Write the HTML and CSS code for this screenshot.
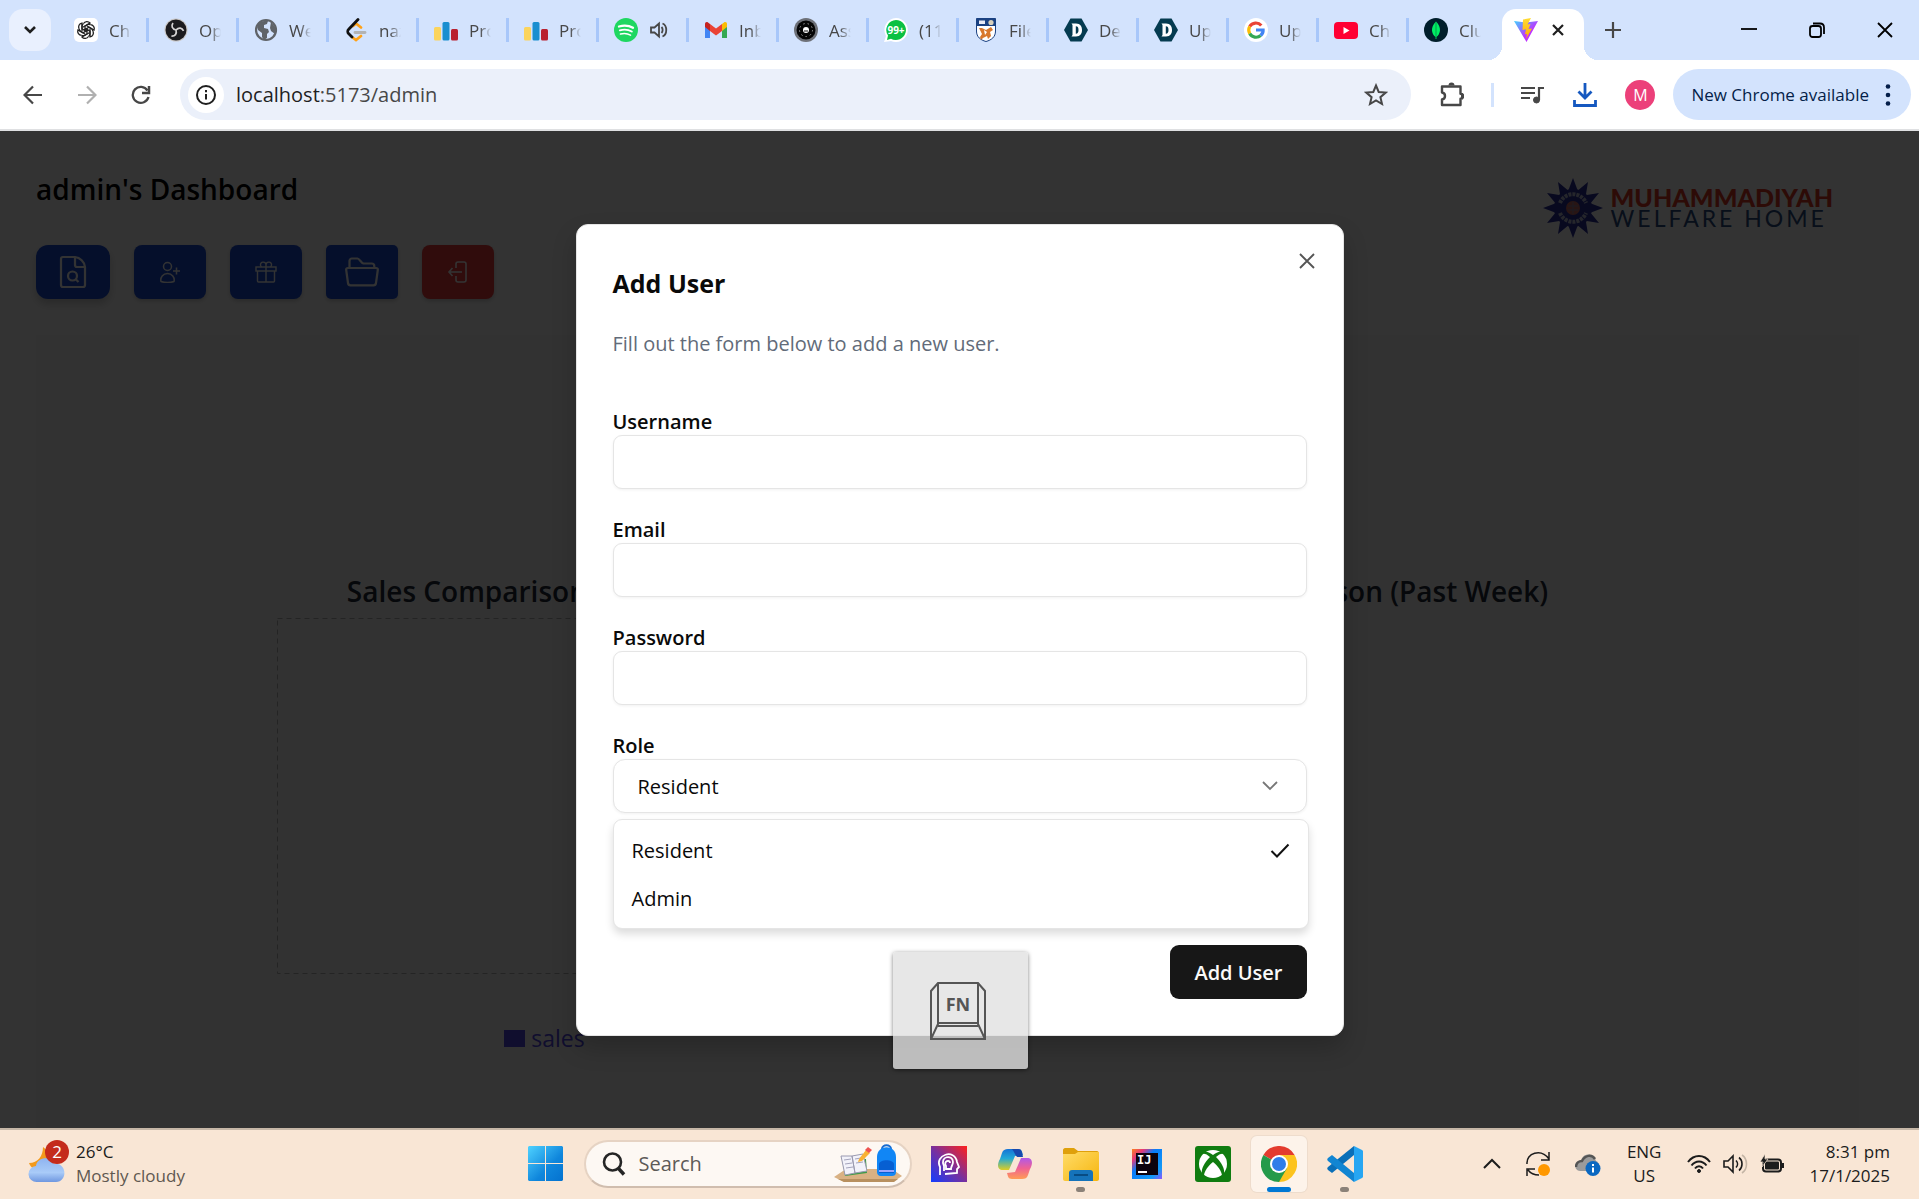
FILE: index.html
```html
<!DOCTYPE html>
<html lang="en">
<head>
    <meta charset="UTF-8">
    <title>Admin Dashboard</title>
    <link rel="stylesheet" href="styles.css">
</head>
<body>
    <!-- tab strip -->
    <div class="tab-strip">
        <button class="tab-search" aria-label="Search tabs">
            <svg width="14" height="10" viewBox="0 0 14 10"><path d="M2 2l5 5 5-5" fill="none" stroke="#1f1f1f" stroke-width="2.6"/></svg>
        </button>
        <div class="tabs">
            <div class="tab">
                <svg class="favicon" viewBox="0 0 24 24"><rect width="24" height="24" rx="5" fill="#fff"/><g fill="none" stroke="#222" stroke-width="1.3"><g id="petal"><path d="M9.500 5.500a4 4 0 0 1 6.500-.5l-5 3v5.500"/><path d="M9.500 5.500c-1.300 1-1.500 2-1.500 3v5"/></g><use href="#petal" transform="rotate(60 12 12)"/><use href="#petal" transform="rotate(120 12 12)"/><use href="#petal" transform="rotate(180 12 12)"/><use href="#petal" transform="rotate(240 12 12)"/><use href="#petal" transform="rotate(300 12 12)"/></g></svg>
                <span class="tab-title">Chat</span>
            </div>
            <div class="tab">
                <svg class="favicon" viewBox="0 0 24 24"><circle cx="12" cy="12" r="11.500" fill="#c9c6c4"/><circle cx="12" cy="12" r="10.500" fill="#1c1b1e"/><g fill="none" stroke="#d5d2d2" stroke-width="1.700"><path id="obs" d="M12 12c-4-1-5-4-3-7"/><use href="#obs" transform="rotate(120 12 12)"/><use href="#obs" transform="rotate(240 12 12)"/></g></svg>
                <span class="tab-title">Open</span>
            </div>
            <div class="tab">
                <svg class="favicon" viewBox="0 0 24 24"><circle cx="12" cy="12" r="10" fill="#d3e3fd" stroke="#5f6368" stroke-width="2.200"/><path d="M3 9c2-5 6-7 11-6l-1 3-3 1v3l4 1 1 3-2 2v4l-3 2-2-3v-4L4 12zM17 4l5 6-1 6-4-3-1-3z" fill="#5f6368"/></svg>
                <span class="tab-title">Web</span>
            </div>
            <div class="tab">
                <svg class="favicon" viewBox="0 0 24 24"><g fill="none" stroke-linecap="round" stroke-width="2.800"><path d="M9 8l3-2.500 5 4M8 19l4 3 5-4" stroke="#ffa116"/><path d="M14 1.500L4.500 11.500c-1 1-1 3 0 4L8 19" stroke="#111"/><path d="M11 14.500h10" stroke="#b3b3b3"/></g></svg>
                <span class="tab-title">nazi</span>
            </div>
            <div class="tab">
                <svg class="favicon" viewBox="0 0 24 24"><rect y="9" width="7" height="13.500" rx="1.500" fill="#fbd45c"/><rect x="8.500" y="4" width="7" height="18.500" rx="1.500" fill="#1a8fd0"/><rect x="17" y="11" width="7" height="11.500" rx="1.500" fill="#b9202f"/></svg>
                <span class="tab-title">Proj</span>
            </div>
            <div class="tab">
                <svg class="favicon" viewBox="0 0 24 24"><rect y="9" width="7" height="13.500" rx="1.500" fill="#fbd45c"/><rect x="8.500" y="4" width="7" height="18.500" rx="1.500" fill="#1a8fd0"/><rect x="17" y="11" width="7" height="11.500" rx="1.500" fill="#b9202f"/></svg>
                <span class="tab-title">Proj</span>
            </div>
            <div class="tab">
                <svg class="favicon" viewBox="0 0 24 24"><circle cx="12" cy="12" r="12" fill="#1ed760"/><g fill="none" stroke="#fff" stroke-linecap="round"><path d="M5 8.500c5-1.500 10-1 14 1.300" stroke-width="2.300"/><path d="M5.800 12.300c4.200-1.200 8.500-.8 12 1.200" stroke-width="1.900"/><path d="M6.500 16c3.500-.9 7-.6 10 1.100" stroke-width="1.600"/></g></svg>
                <svg width="20" height="20" viewBox="0 0 20 20" fill="none" stroke="#474747" stroke-width="1.800"><path d="M2 7.500h3.500L10 3.500v13l-4.500-4H2zM12.500 7c1.500 1.500 1.500 4.500 0 6M13.500 3.500c5 2 5 11 0 13"/></svg>
            </div>
            <div class="tab">
                <svg class="favicon" viewBox="0 0 24 24"><path d="M1 7v13h5V10z" fill="#4285f4"/><path d="M23 7v13h-5V10z" fill="#34a853"/><path d="M18 6l2-1.500c1.500-1 3 0 3 1.500v3l-5 4z" fill="#fbbc04"/><path d="M6 6v7l6 4.500 6-4.500V6l-6 4.500z" fill="#ea4335"/><path d="M1 9V6c0-1.500 1.500-2.500 3-1.500L6 6v7z" fill="#c5221f"/></svg>
                <span class="tab-title">Inbox</span>
            </div>
            <div class="tab">
                <svg class="favicon" viewBox="0 0 24 24"><circle cx="12" cy="12" r="12" fill="#6e7178"/><circle cx="12" cy="12" r="9.500" fill="#050505"/><circle cx="12" cy="12" r="6.500" fill="none" stroke="#999" stroke-dasharray="1.500 3"/><circle cx="12" cy="12" r="3" fill="#fff"/><path d="M10 13h4" stroke="#111"/></svg>
                <span class="tab-title">Assi</span>
            </div>
            <div class="tab">
                <svg class="favicon" viewBox="0 0 24 24"><path d="M12 0a12 12 0 1 1-5 23l-7 1 2-6A12 12 0 0 1 12 0z" fill="#fff"/><path d="M12 2a10 10 0 1 1-5 18.700L3 22l1-4.500A10 10 0 0 1 12 2z" fill="#0bc142"/><text x="12" y="16" text-anchor="middle" class="badge-text">99+</text></svg>
                <span class="tab-title">(11)</span>
            </div>
            <div class="tab">
                <svg class="favicon" viewBox="0 0 24 24"><path d="M2.500.5h19V13c0 6-4 9-9.500 10.500C6.500 22 2.500 19 2.500 13z" fill="#fff" stroke="#1b4282"/><path d="M2.500.5h19V8h-19z" fill="#1b4282"/><path d="M5 2.500h6v3.500H5z" fill="#e8eaf5"/><circle cx="17" cy="4.500" r="2.600" fill="#d9d1bc"/><path d="M5 10h3l4 2 5-3 2 3-3 2 1 4-3 3-1-3-4 2-2 2-1-3 2-3z" fill="#d8782c"/><path d="M10 12l3 2-2 3z" fill="#fff"/></svg>
                <span class="tab-title">Files</span>
            </div>
            <div class="tab">
                <svg class="favicon" viewBox="0 0 24 24"><path d="M6.500.5h11L24 12l-6.500 11.500h-11L0 12z" fill="#053b50"/><path d="M7.500 5.500h4.500c4.500 0 6 3 6 6.500s-1.500 6.500-6 6.500H7.500l1-1.500V7zm4.300 2.800v7.400c2.200 0 2.700-1.700 2.700-3.700s-.5-3.700-2.700-3.700z" fill="#fff" fill-rule="evenodd"/></svg>
                <span class="tab-title">Dep</span>
            </div>
            <div class="tab">
                <svg class="favicon" viewBox="0 0 24 24"><path d="M6.500.5h11L24 12l-6.500 11.500h-11L0 12z" fill="#053b50"/><path d="M7.500 5.500h4.500c4.500 0 6 3 6 6.500s-1.500 6.500-6 6.500H7.500l1-1.500V7zm4.300 2.800v7.400c2.200 0 2.700-1.700 2.700-3.700s-.5-3.700-2.700-3.700z" fill="#fff" fill-rule="evenodd"/></svg>
                <span class="tab-title">Upl</span>
            </div>
            <div class="tab">
                <svg class="favicon" viewBox="0 0 24 24"><circle cx="12" cy="12" r="12" fill="#fff"/><g fill="none" stroke-width="3.200"><path d="M17.300 7.500A7.200 7.200 0 0 0 5.700 8.500" stroke="#ea4335"/><path d="M5.700 8.500a7.200 7.200 0 0 0 0 7" stroke="#fbbc04"/><path d="M5.700 15.500a7.200 7.200 0 0 0 11 2" stroke="#34a853"/><path d="M16.700 17.500c1.700-1.500 2.500-3.500 2.400-5.500H12" stroke="#4285f4"/></g></svg>
                <span class="tab-title">Upl</span>
            </div>
            <div class="tab">
                <svg class="favicon" viewBox="0 0 24 24"><rect y="4" width="24" height="17" rx="4" fill="#ff0033"/><path d="M9.500 9v7l6-3.500z" fill="#fff"/></svg>
                <span class="tab-title">Cha</span>
            </div>
            <div class="tab tab-last">
                <svg class="favicon" viewBox="0 0 24 24"><circle cx="12" cy="12" r="12" fill="#001e2b"/><path d="M12 3.500c6 6 4.500 12.500.4 15.500v2h-.8v-2C7.500 16 6 9.500 12 3.500z" fill="#00ed64"/><path d="M12 4v15" stroke="#00a04a"/></svg>
                <span class="tab-title">Clus</span>
            </div>
            <div class="tab-active">
                <svg class="favicon" viewBox="0 0 24 24">
                    <defs>
                        <linearGradient id="vite" x1="0" y1="0" x2="1" y2="1"><stop stop-color="#41d1ff"/><stop offset=".6" stop-color="#bd34fe"/></linearGradient>
                        <linearGradient id="bolt" x1="0" y1="0" x2="0" y2="1"><stop stop-color="#ffdd35"/><stop offset="1" stop-color="#ffa800"/></linearGradient>
                    </defs>
                    <path d="M0 3l12 1.500L24 3 12.500 24z" fill="url(#vite)"/><path d="M17 0L9 1.500 8.500 12l3.500-.7-1 5 2-.4L12 21l6-10.500-3.500.5 2-5-3 .4z" fill="url(#bolt)"/>
                </svg>
                <button class="icon-button" aria-label="Close tab"><svg width="14" height="14" viewBox="0 0 14 14"><path d="M2 2l10 10M12 2L2 12" stroke="#1f1f1f" stroke-width="2.200"/></svg></button>
            </div>
        </div>
        <button class="icon-button new-tab" aria-label="New tab"><svg width="16" height="16" viewBox="0 0 16 16"><path d="M8 0v16M0 8h16" stroke="#474747" stroke-width="2.200"/></svg></button>
        <div class="window-controls">
            <button class="icon-button" aria-label="Minimize"><svg width="16" height="16" viewBox="0 0 16 16"><path d="M0 7h16" stroke="#000" stroke-width="1.800"/></svg></button>
            <button class="icon-button" aria-label="Restore"><svg width="16" height="16" viewBox="0 0 16 16" fill="none" stroke="#000" stroke-width="1.800"><rect x="1" y="4" width="11" height="11" rx="2.500"/><path d="M4 1.500h7c2.500 0 4 1.500 4 4V12"/></svg></button>
            <button class="icon-button" aria-label="Close"><svg width="16" height="16" viewBox="0 0 16 16"><path d="M1 1l14 14M15 1L1 15" stroke="#000" stroke-width="1.800"/></svg></button>
        </div>
    </div>

    <!-- toolbar -->
    <div class="toolbar">
        <div class="nav-buttons">
            <button class="icon-button" aria-label="Back"><svg width="20" height="20" viewBox="0 0 20 20" fill="none" stroke="#474747" stroke-width="2.200"><path d="M19 10H2M10 1.500L1.500 10l8.500 8.500"/></svg></button>
            <button class="icon-button" aria-label="Forward"><svg width="20" height="20" viewBox="0 0 20 20" fill="none" stroke="#b0b0b0" stroke-width="2.200"><path d="M1 10h17M10 1.500l8.500 8.500-8.500 8.500"/></svg></button>
            <button class="icon-button" aria-label="Reload"><svg width="20" height="20" viewBox="0 0 20 20" fill="none" stroke="#474747" stroke-width="2.300"><path d="M17.500 12A8 8 0 1 1 16.500 5.500"/><path d="M18 1v7h-7" stroke-width="2.500"/></svg></button>
        </div>
        <div class="address-bar">
            <span class="site-info">
                <svg width="22" height="22" viewBox="0 0 22 22"><circle cx="11" cy="11" r="9" fill="none" stroke="#1f1f1f" stroke-width="2"/><path d="M11 10v5.500M11 6v2.200" stroke="#1f1f1f" stroke-width="2"/></svg>
            </span>
            <span class="url"><b>localhost</b>:5173/admin</span>
            <button class="icon-button" aria-label="Bookmark"><svg width="24" height="24" viewBox="0 0 24 24"><path d="M12 2.500l2.700 6.500 7 .6-5.300 4.600 1.600 6.800-6-3.600L6 21l1.600-6.800L2.300 9.600l7-.6z" fill="none" stroke="#474747" stroke-width="2"/></svg></button>
        </div>
        <div class="toolbar-icons">
            <button class="icon-button" aria-label="Extensions"><svg width="26" height="26" viewBox="-1 1 26 26"><path d="M3 5.500h18.500v7.200a2.500 2.500 0 0 1 0 5V24H3v-5.500c4-.5 4-6.500 0-7z" fill="none" stroke="#474747" stroke-width="2.400" stroke-linejoin="round"/><path d="M9.500 4.500a3 3 0 0 1 6 0zM22 12a3 3 0 0 1 0 6z" fill="#474747"/></svg></button>
            <span class="separator"></span>
            <button class="icon-button" aria-label="Media"><svg width="24" height="20" viewBox="0 0 24 20" fill="none" stroke="#474747" stroke-width="2.200"><path d="M0 3h14M0 8h14M0 13h9"/><path d="M18 15V3h5"/><circle cx="15.500" cy="15" r="3" fill="#474747" stroke-width="1"/></svg></button>
            <button class="icon-button" aria-label="Downloads"><svg width="26" height="26" viewBox="0 0 26 26" fill="none" stroke="#1558c0" stroke-width="2.800"><path d="M13 1v14M6.500 9.500L13 16l6.500-6.500M2.500 18v5.500h21V18"/></svg></button>
            <span class="avatar">M</span>
        </div>
        <button class="update-pill">New Chrome available
            <svg width="6" height="22" viewBox="0 0 6 22" fill="#041e49"><circle cx="3" cy="2.500" r="2.300"/><circle cx="3" cy="11" r="2.300"/><circle cx="3" cy="19.500" r="2.300"/></svg>
        </button>
    </div>

    <main class="page">
        <div class="dashboard">
            <header class="dashboard-header">
                <div>
                    <h1>admin's Dashboard</h1>
                    <div class="actions">
                        <button class="action action-report" aria-label="View report"><svg width="34" height="34" viewBox="0 0 34 34" fill="none" stroke="#fff" stroke-width="2.200"><path d="M7 2h12c5 .5 9.500 5 10 10v18c0 1-1 2-2 2H7c-1 0-2-1-2-2V4c0-1 1-2 2-2z"/><path d="M19 2v8c0 1.200.8 2 2 2h8" /><circle cx="16.500" cy="21" r="4.500"/><path d="M19.500 24l3 3"/></svg></button>
                        <button class="action" aria-label="Add user"><svg width="22" height="22" viewBox="0 0 22 22" fill="none" stroke="#fff" stroke-width="1.500"><circle cx="8.500" cy="5.500" r="4"/><path d="M2 20.500c-1-4 2-8 6.500-8s7.500 4 6.500 8c-4 1.300-9 1.300-13 0zM17.500 6.500v7M14 10h7"/></svg></button>
                        <button class="action" aria-label="Gifts"><svg width="22" height="22" viewBox="0 0 22 22" fill="none" stroke="#fff" stroke-width="1.400"><rect x="1" y="6" width="20" height="4"/><path d="M2.500 10v10c0 .7.500 1 1 1h15c.6 0 1-.3 1-1V10M11 6v15"/><path d="M11 6V3.500C10.500 0 5 .5 5.500 4c0 1 .5 1.500 1 2M11 3.500c.5-3.500 6-3 5.500.5 0 1-.5 1.500-1 2"/></svg></button>
                        <button class="action action-files" aria-label="Files"><svg width="34" height="30" viewBox="0 0 34 30" fill="none" stroke="#fff" stroke-width="2.200" stroke-linejoin="round"><path d="M4.500 11V4c0-1.500 1-2.500 2.500-2.500h5.500c2 0 3.500 4.500 6 5h8c1.800 0 2.800 1 2.800 2.500v2"/><path d="M3 11h28c1.200 0 2 .8 1.800 2l-1.800 13c-.2 1.500-1 2.300-2.500 2.300h-23c-1.500 0-2.300-.8-2.500-2.300L1.200 13c-.2-1.200.6-2 1.800-2z"/></svg></button>
                        <button class="action action-logout" aria-label="Log out"><svg width="22" height="22" viewBox="0 0 22 22" fill="none" stroke="#fff" stroke-width="1.600"><path d="M9 7V3c0-1.200.8-2 2-2h6c1.200 0 2 .8 2 2v16c0 1.200-.8 2-2 2h-6c-1.200 0-2-.8-2-2v-4M15 11H2M5.500 7L2 11l3.500 4"/></svg></button>
                    </div>
                </div>
                <div class="brand">
                    <svg width="60" height="62" viewBox="-30 -31 60 62">
                        <g fill="#2a2f9c"><path id="ray" d="M0-30L6-14H-6zM0 30L6 14H-6z"/><use href="#ray" transform="rotate(30)"/><use href="#ray" transform="rotate(60)"/><use href="#ray" transform="rotate(90)"/><use href="#ray" transform="rotate(120)"/><use href="#ray" transform="rotate(150)"/></g>
                        <circle r="19" fill="#2a2f9c"/><path d="M-13-5A14 14 0 0 1 13-5M-13 5A14 14 0 0 0 13 5" fill="none" stroke="#b9bdd6" stroke-width="4" stroke-dasharray="3 1"/><circle r="7" fill="#c96a64"/><path d="M-5-2h10M-5 2h10M0-6V6" stroke="#8a86a8"/>
                    </svg>
                    <div class="brand-text">
                        <span class="brand-name">MUHAMMADIYAH</span>
                        <span class="brand-sub">WELFARE HOME</span>
                    </div>
                </div>
            </header>
            <section class="charts">
                <div class="chart-grid">
                    <div class="chart">
                        <h2>Sales Comparison (Past Week)</h2>
                        <svg class="plot"><rect x="0.5" y="0.5" width="544" height="355" fill="none" stroke="#b4b4b4" stroke-dasharray="5 4"/></svg>
                        <div class="legend"><i></i>sales</div>
                    </div>
                    <div class="chart">
                        <h2>Sales Comparison (Past Week)</h2>
                    </div>
                </div>
            </section>
        </div>

        <div class="overlay">
            <div class="dialog" role="dialog" aria-labelledby="dialogTitle">
                <button class="icon-button dialog-close" aria-label="Close"><svg width="16" height="16" viewBox="0 0 16 16"><path d="M1 1l14 14M15 1L1 15" stroke="#555" stroke-width="1.900"/></svg></button>
                <h2 id="dialogTitle">Add User</h2>
                <p>Fill out the form below to add a new user.</p>
                <form>
                    <div class="field">
                        <label for="username">Username</label>
                        <input type="text" id="username">
                    </div>
                    <div class="field">
                        <label for="email">Email</label>
                        <input type="email" id="email">
                    </div>
                    <div class="field">
                        <label for="password">Password</label>
                        <input type="password" id="password">
                    </div>
                    <div class="field">
                        <label for="role">Role</label>
                        <div class="select-wrap">
                            <select id="role">
                                <option selected>Resident</option>
                                <option>Admin</option>
                            </select>
                            <svg class="select-arrow" width="16" height="10" viewBox="0 0 16 10"><path d="M1 1l7 7 7-7" fill="none" stroke="#777" stroke-width="1.800"/></svg>
                            <ul class="options" role="listbox">
                                <li role="option" aria-selected="true">Resident
                                    <svg width="20" height="16" viewBox="0 0 20 16"><path d="M1.500 8l5.500 5.500L18.500 1.500" fill="none" stroke="#111" stroke-width="2"/></svg>
                                </li>
                                <li role="option">Admin</li>
                            </ul>
                        </div>
                    </div>
                    <div class="dialog-footer">
                        <button type="button" class="submit">Add User</button>
                    </div>
                </form>
            </div>
        </div>
    </main>

    <!-- key indicator shown over everything -->
    <div class="fn-key">
        <svg width="58" height="60" viewBox="0 0 58 60" fill="none" stroke="#555" stroke-width="2">
            <path d="M9 2h40l7 8v48H2V10z"/><path d="M9 2v41L2 58M49 2v41l7 15M9 42h40M9 45h40"/>
            <text x="29" y="30" text-anchor="middle" class="fn-text">FN</text>
        </svg>
    </div>

    <footer class="taskbar">
        <div class="weather">
            <div class="weather-icon">
                <svg width="38" height="40" viewBox="0 0 38 40">
                    <defs><linearGradient id="cloud" x1="0" y1="0" x2="0" y2="1"><stop stop-color="#8fb4f0"/><stop offset=".6" stop-color="#a9cbf8"/><stop offset="1" stop-color="#6f97e0"/></linearGradient></defs>
                    <path d="M15 3c0 9-5 16-14 16 2 6 9 9 15 6s8-16-1-22z" fill="#f39a1c"/><path d="M9 38a8 8 0 0 1-1-16C9 12 25 12 26 20c13-2 14 18 2 18z" fill="url(#cloud)"/>
                </svg>
                <span class="weather-badge">2</span>
            </div>
            <div class="weather-text"><span>26°C</span><span class="muted">Mostly cloudy</span></div>
        </div>

        <div class="apps">
            <svg width="35" height="35" viewBox="0 0 35 35">
                <defs><linearGradient id="win" gradientUnits="userSpaceOnUse" x1="0" y1="0" x2="35" y2="35"><stop stop-color="#4fd2ff"/><stop offset=".6" stop-color="#0f86dc"/><stop offset="1" stop-color="#0472cf"/></linearGradient></defs>
                <path d="M1 0h16v17H0V1zM18 0h16l1 1v16H18zM0 18h17v17H1l-1-1zM18 18h17v16l-1 1H18z" fill="url(#win)"/>
            </svg>
            <div class="search">
                <svg width="24" height="24" viewBox="0 0 24 24" fill="none" stroke="#252525" stroke-width="2.600"><circle cx="10.500" cy="10" r="8.500"/><path d="M16.500 16.500l5.500 6" stroke-width="3.500"/></svg>
                <input type="text" placeholder="Search" aria-label="Search">
                <svg width="68" height="40" viewBox="0 0 68 40">
                    <path d="M0 33l12-8h46l10 7-9 6H10z" fill="#d9b183"/><path d="M4 35h60l-4 3H10z" fill="#b8905f"/>
                    <path d="M8 13l24 2 1 14-22 3z" fill="#3f9a48"/><path d="M7 12l11 0 3 17-10 2zM18 12l11-2 4 17-12 2z" fill="#f2f2fa" stroke="#9a9ab0"/><path d="M10 16l7-1M11 20l7-1M12 24l7-1M21 15l6-1M22 19l7-1" stroke="#a4a4bc"/>
                    <path d="M25 15l7-9 4 3-8 8-4 1z" fill="#f9b233"/><path d="M31 6l3-3 4 3-3 3z" fill="#ee5350"/>
                    <path d="M48 5c0-5 9-5 9 0" fill="none" stroke="#176bd0" stroke-width="2"/><path d="M43 13c0-13 19-13 19 0v15c0 3-2 4-4 4H47c-3 0-4-2-4-4z" fill="#1186f5"/><path d="M45 20c1-5 14-5 15 0v9H45z" fill="#075fd2"/><path d="M45 27h15" stroke="#9aa5ff" stroke-width="2"/>
                </svg>
            </div>
            <div class="app">
                <svg width="36" height="36" viewBox="0 0 36 36"><defs><linearGradient id="head" x1="0" y1="1" x2="1" y2="0"><stop stop-color="#123cff"/><stop offset=".5" stop-color="#7a309c"/><stop offset="1" stop-color="#ff211c"/></linearGradient></defs><rect width="36" height="36" fill="url(#head)"/><g fill="none" stroke="#fff" stroke-width="1.800"><path d="M9 29V21C3 9 24 2 26 16l2 5-2 2v4l-12 1"/><path d="M13 25v-5C8 10 22 8 22 16c0 3-2 4-2 7h-5v-3c-3-5 4-7 4-3"/></g></svg>
            </div>
            <div class="app">
                <svg width="36" height="36" viewBox="0 0 36 36"><defs><linearGradient id="cpa" x1="0" y1="0" x2="0" y2="1"><stop stop-color="#1573d6"/><stop offset=".45" stop-color="#22a9d5"/><stop offset="1" stop-color="#dfce22"/></linearGradient><linearGradient id="cpb" x1="0" y1="0" x2="0" y2="1"><stop stop-color="#b158e8"/><stop offset=".5" stop-color="#f06292"/><stop offset="1" stop-color="#ff9c55"/></linearGradient></defs><path d="M21 3c4 0 4 3 5 6l-8 1-6 14H6c-6 0-6-6-3-11l2-6c1-3 3-4 6-4z" fill="url(#cpa)"/><path d="M15 33c-4 0-4-3-5-6l8-1 6-14h6c6 0 6 6 3 11l-2 6c-1 3-3 4-6 4z" fill="url(#cpb)"/><path d="M14 3h7c4 0 4 3 5 8h-5c-3 0-4-8-7-8z" fill="#1749ad"/></svg>
            </div>
            <div class="app running">
                <svg width="36" height="36" viewBox="0 0 36 36"><defs><linearGradient id="fold" x1="0" y1="0" x2="1" y2="1"><stop stop-color="#ffdc68"/><stop offset="1" stop-color="#f6b50e"/></linearGradient></defs><path d="M0 4c0-1 1-2 2-2h9l4 3h19c1 0 2 1 2 2v5H0z" fill="#dfa00b"/><path d="M0 8h12l3-2h21v27c0 1-1 2-2 2H2c-1 0-2-1-2-2z" fill="url(#fold)"/><path d="M6 35v-8c0-2 1-3 3-3h18c2 0 3 1 3 3v8z" fill="#1573ba"/><path d="M11 29h14" stroke="#084c83" stroke-width="2"/></svg>
            </div>
            <div class="app">
                <svg width="36" height="36" viewBox="0 0 36 36"><defs><linearGradient id="ij" x1="0" y1="0" x2="1" y2="1"><stop stop-color="#fc801d"/><stop offset=".2" stop-color="#e6387a"/><stop offset=".4" stop-color="#087cfa"/><stop offset=".8" stop-color="#1299f6"/><stop offset="1" stop-color="#9254ff"/></linearGradient></defs><rect x="3" y="3" width="30" height="30" fill="url(#ij)"/><rect x="7" y="7" width="22" height="22" fill="#0c030e"/><text x="8" y="18" class="ij-text">IJ</text><path d="M9 26h9" stroke="#fff" stroke-width="2"/></svg>
            </div>
            <div class="app">
                <svg width="36" height="36" viewBox="0 0 36 36"><rect width="36" height="36" rx="3" fill="#107c10"/><circle cx="18" cy="18" r="14" fill="#fff"/><path d="M9 6c3-1 6 1 9 3 3-2 6-4 9-3l2 2c-2-1-5 0-8 3 6 6 9 12 8 17l-2 2c0-5-5-11-9-14-4 3-9 9-9 14l-2-2c-1-5 2-11 8-17-3-3-6-4-8-3z" fill="#107c10"/></svg>
            </div>
            <div class="app active">
                <svg width="36" height="36" viewBox="0 0 36 36"><path d="M18 18L2.400 9A18 18 0 0 1 33.600 9z" fill="#e33b2e"/><path d="M18 18V9h15.600A18 18 0 0 1 18 36z" fill="#fcc31e"/><path d="M18 18l7.800 4.500L18 36A18 18 0 0 1 2.400 9z" fill="#249a4a"/><circle cx="18" cy="18" r="9" fill="#fff"/><circle cx="18" cy="18" r="7" fill="#2f7de9"/></svg>
            </div>
            <div class="app running">
                <svg width="36" height="36" viewBox="0 0 36 36"><path d="M27 0v9L5 27l-4-3c-1-1-1-2 0-3z" fill="#0a6fb8"/><path d="M27 36v-9L5 9l-4 3c-1 1-1 2 0 3z" fill="#1185d2"/><path d="M27 0l8 4c1 .5 1 1 1 2v24c0 1 0 1.500-1 2l-8 4z" fill="#27a6f2"/></svg>
            </div>
        </div>

        <div class="tray">
            <svg width="18" height="12" viewBox="0 0 18 12"><path d="M1 10l8-8 8 8" fill="none" stroke="#1c1c1c" stroke-width="2"/></svg>
            <svg width="26" height="26" viewBox="0 0 26 26" fill="none" stroke="#1c1c1c" stroke-width="1.500"><path d="M2 13C1 2 16-3 24 8M24 1v8h-8M2 25v-7h8M3 19c3 4 6 5 11 5"/><circle cx="19" cy="19" r="6" fill="#ff9800" stroke="none"/></svg>
            <svg width="26" height="24" viewBox="0 0 26 24"><path d="M5 19c-7-1-6-10 1-10C8 0 19 1 21 9c4 1 4 9-1 10z" fill="#9b9b9b"/><path d="M1 15c0-4 3-6 6-6 3-6 10-7 13-2" fill="none" stroke="#555" stroke-width="2.500"/><circle cx="18" cy="16.500" r="7.500" fill="#0b68c1"/><path d="M18 15.500v5M18 12v2" stroke="#fff" stroke-width="2"/></svg>
            <div class="language"><span>ENG</span><span>US</span></div>
            <div class="status">
                <svg width="24" height="20" viewBox="0 0 24 20" fill="none" stroke="#1c1c1c" stroke-width="2"><path d="M1 8c6-8 16-8 22 0M4.500 11.500c4-5.500 11-5.500 15 0M8 14.500c2-3 6-3 8 0"/><circle cx="12" cy="17" r="1.500" fill="#1c1c1c" stroke-width="1"/></svg>
                <svg width="25" height="22" viewBox="0 0 25 22" fill="none" stroke="#1c1c1c" stroke-width="1.600"><path d="M1 8h4l5-5v16l-5-5H1zM13 7.500c2 2 2 5 0 7M16 4.500c4 3 4 10 0 13"/><path d="M19 2c6 4 6 14 0 18" stroke="#c4b5a6"/></svg>
                <svg width="25" height="20" viewBox="0 0 25 20"><rect x="3" y="5.500" width="18" height="12" rx="3" fill="none" stroke="#1c1c1c" stroke-width="2"/><rect x="5" y="7.500" width="14" height="8" rx="1" fill="#1c1c1c"/><path d="M21 9h3v5h-3z" fill="#1c1c1c"/><path d="M5 0L0 8h3l-1 5 6-8H5z" fill="#1c1c1c" stroke="#f9e6d5" stroke-width=".7"/></svg>
            </div>
            <div class="clock"><span>8:31 pm</span><span>17/1/2025</span></div>
        </div>
    </footer>
</body>
</html>
```

FILE: styles.css
```css
* {
    box-sizing: border-box;
}

body {
    margin: 0;
    height: 100vh;
    display: flex;
    flex-direction: column;
    overflow: hidden;
    font-family: "Open Sans", "Noto Sans", sans-serif;
    color: #0a0a0a;
}

button, input, select {
    font-family: inherit;
}

svg {
    flex-shrink: 0;
}

.icon-button {
    display: flex;
    padding: 0;
    border: none;
    background: none;
    cursor: pointer;
}

/* tab strip */
.tab-strip {
    display: flex;
    align-items: center;
    height: 60px;
    flex-shrink: 0;
    padding: 9px 26px 0 9px;
    background-color: #d3e3fd;
}

.tab-search {
    display: flex;
    align-items: center;
    justify-content: center;
    width: 42px;
    height: 42px;
    margin-bottom: 9px;
    border: none;
    border-radius: 14px;
    background-color: #e9f0fe;
}

.tabs {
    display: flex;
    height: 51px;
    margin-left: 9px;
}

.tab {
    display: flex;
    align-items: center;
    gap: 11px;
    width: 90px;
    padding: 0 1px 9px 14px;
}

.tab::after {
    content: "";
    width: 3px;
    height: 24px;
    margin-left: auto;
    background-color: #a8c7fa;
}

.tab-last::after {
    background: none;
}

.favicon {
    width: 24px;
    height: 24px;
}

.tab-title {
    width: 22px;
    overflow: hidden;
    white-space: nowrap;
    font-size: 17px;
    line-height: 26px;
    padding-top: 2px;
    color: #474747;
    -webkit-mask-image: linear-gradient(90deg, #000 50%, transparent);
    mask-image: linear-gradient(90deg, #000 50%, transparent);
}

.badge-text {
    font-size: 10px;
    font-weight: 700;
    fill: #fff;
}

.tab-active {
    position: relative;
    display: flex;
    align-items: center;
    gap: 13px;
    width: 82px;
    margin-left: 2px;
    padding: 0 12px 9px;
    border-radius: 14px 14px 0 0;
    background-color: #fff;
}

.tab-active::before,
.tab-active::after {
    content: "";
    position: absolute;
    bottom: 0;
    width: 14px;
    height: 14px;
}

.tab-active::before {
    right: 100%;
    background: radial-gradient(circle at 0 0, transparent 14px, #fff 14px);
}

.tab-active::after {
    left: 100%;
    background: radial-gradient(circle at 100% 0, transparent 14px, #fff 14px);
}

.new-tab {
    margin: 0 0 9px 21px;
}

.window-controls {
    display: flex;
    gap: 52px;
    margin: 0 0 9px auto;
}

/* toolbar */
.toolbar {
    display: flex;
    align-items: center;
    height: 71px;
    flex-shrink: 0;
    padding: 0 8px 0 23px;
    border-bottom: 2px solid #dfe0e2;
    background-color: #fff;
}

.nav-buttons {
    display: flex;
    gap: 34px;
    margin-right: 29px;
}

.address-bar {
    display: flex;
    flex: 1;
    align-items: center;
    height: 51px;
    padding: 0 23px 0 8px;
    border-radius: 26px;
    background-color: #ebf0fa;
}

.site-info {
    display: flex;
    align-items: center;
    justify-content: center;
    width: 36px;
    height: 36px;
    border-radius: 50%;
    background-color: #fff;
}

.url {
    flex: 1;
    margin-left: 12px;
    font-size: 20px;
    color: #474747;
}

.url b {
    font-weight: 400;
    color: #1f1f1f;
}

.toolbar-icons {
    display: flex;
    align-items: center;
    gap: 27px;
    margin: 0 18px 0 27px;
}

.separator {
    width: 3px;
    height: 24px;
    background-color: #d3e3fd;
}

.avatar {
    width: 30px;
    height: 30px;
    border-radius: 50%;
    background-color: #ec407a;
    color: #fff;
    font-size: 16px;
    line-height: 30px;
    text-align: center;
}

.update-pill {
    display: flex;
    align-items: center;
    gap: 16px;
    height: 51px;
    padding: 0 20px 0 18px;
    border: none;
    border-radius: 26px;
    background-color: #d3e3fd;
    color: #041e49;
    font-size: 17px;
}

/* dashboard */
.page {
    position: relative;
    flex: 1;
    min-height: 0;
    overflow: hidden;
}

.dashboard {
    display: flex;
    flex-direction: column;
    height: 100%;
    padding: 38px 60px 0 36px;
}

.dashboard-header {
    display: flex;
    justify-content: space-between;
    align-items: flex-start;
}

h1 {
    margin: 0 0 36px;
    font-size: 28px;
    line-height: 40px;
    font-weight: 600;
    color: #000;
}

.actions {
    display: flex;
    gap: 24px;
}

.action {
    display: flex;
    align-items: center;
    justify-content: center;
    width: 72px;
    height: 54px;
    border: none;
    border-radius: 8px;
    background-color: #1d4ed8;
    box-shadow: 0 2px 4px rgba(0, 0, 0, 0.2);
}

.action-report {
    width: 74px;
    border-radius: 12px;
    box-shadow: 0 5px 8px rgba(0, 0, 0, 0.2);
}

.action-files {
    border-radius: 5px;
}

.action-logout {
    background-color: #ef3c3c;
}

.brand {
    display: flex;
    align-items: center;
    gap: 8px;
    margin: 8px 26px 0 0;
}

.brand-text {
    display: flex;
    flex-direction: column;
    font-family: Lato, sans-serif;
    font-size: 24px;
    line-height: 21px;
}

.brand-name {
    font-size: 25px;
    font-weight: 900;
    color: #e23a24;
}

.brand-sub {
    font-size: 23px;
    color: #2a4a80;
    letter-spacing: 3px;
}

.charts {
    flex: 1;
    margin-top: 36px;
    padding-top: 236px;
    background-color: #fafafa;
}

.chart-grid {
    display: grid;
    grid-template-columns: 1fr 1fr;
    gap: 24px;
    max-width: 1568px;
    margin: 0 auto;
}

.chart {
    display: flex;
    flex-direction: column;
    align-items: center;
}

.chart h2 {
    margin: 0 0 7px;
    font-size: 28px;
    line-height: 40px;
    font-weight: 600;
    color: #1f2937;
}

.plot {
    width: 546px;
    height: 402px;
}

.legend {
    display: flex;
    align-items: center;
    gap: 6px;
    margin-right: 10px;
    font-size: 23px;
    line-height: 36px;
    color: #4f46e5;
}

.legend i {
    width: 21px;
    height: 17px;
    background-color: #4f46e5;
}

/* dialog */
.overlay {
    position: absolute;
    inset: 0;
    display: flex;
    align-items: center;
    justify-content: center;
    background-color: rgba(0, 0, 0, 0.8);
}

.dialog {
    position: relative;
    width: 768px;
    padding: 36px;
    border: 1px solid #e5e5e5;
    border-radius: 12px;
    background-color: #fff;
    box-shadow: 0 12px 24px rgba(0, 0, 0, 0.2);
}

.dialog-close {
    position: absolute;
    top: 28px;
    right: 28px;
}

.dialog h2 {
    margin: 0;
    font-size: 25px;
    line-height: 44px;
    font-weight: 700;
}

.dialog p {
    margin: 24px 0 48px;
    font-size: 20px;
    line-height: 30px;
    color: #626b79;
}

.field {
    margin-bottom: 26px;
}

.field label {
    display: block;
    height: 28px;
    font-size: 20px;
    line-height: 30px;
    font-weight: 600;
}

.field input,
.field select {
    display: block;
    width: 100%;
    height: 54px;
    padding: 2px 24px 0;
    border: 1px solid #e5e5e5;
    border-radius: 9px;
    background-color: #fff;
    box-shadow: 0 1px 3px rgba(0, 0, 0, 0.06);
    font-size: 20px;
    color: #0a0a0a;
}

.field select {
    appearance: none;
    border-radius: 12px;
}

.select-wrap {
    position: relative;
}

.select-arrow {
    position: absolute;
    top: 22px;
    right: 29px;
}

.options {
    position: absolute;
    top: 60px;
    left: 0;
    right: -2px;
    margin: 0;
    padding: 7px 6px 5px;
    border: 1px solid #e5e5e5;
    border-radius: 9px;
    background-color: #fff;
    box-shadow: 0 5px 9px rgba(0, 0, 0, 0.14);
    list-style: none;
}

.options li {
    display: flex;
    align-items: center;
    justify-content: space-between;
    height: 48px;
    padding: 0 12px;
    font-size: 20px;
}

.dialog-footer {
    display: flex;
    justify-content: flex-end;
    margin-top: 132px;
}

.submit {
    height: 54px;
    padding: 2px 24px 0;
    border: none;
    border-radius: 9px;
    background-color: #171717;
    color: #fafafa;
    font-size: 20px;
    font-weight: 600;
}

.fn-key {
    position: absolute;
    bottom: 130px;
    left: 50%;
    display: flex;
    align-items: center;
    justify-content: center;
    width: 135px;
    height: 117px;
    margin-left: -67px;
    padding-right: 4px;
    border-radius: 3px;
    background-color: rgba(225, 225, 225, 0.8);
    box-shadow: 0 1px 4px rgba(0, 0, 0, 0.5);
}

.fn-text {
    font-size: 18px;
    font-weight: 700;
    fill: #555;
    stroke: none;
}

/* taskbar */
.taskbar {
    display: grid;
    grid-template-columns: 1fr auto 1fr;
    align-items: center;
    height: 71px;
    flex-shrink: 0;
    padding: 0 29px 2px 28px;
    border-top: 2px solid #c6b7a7;
    background-color: #f9e6d5;
    font-size: 17px;
    line-height: 24px;
    color: #1c1c1c;
}

.weather {
    display: flex;
    align-items: center;
    gap: 10px;
}

.weather-icon {
    position: relative;
    display: flex;
}

.weather-badge {
    position: absolute;
    top: -4px;
    right: -3px;
    width: 24px;
    height: 24px;
    border-radius: 50%;
    background-color: #c42b1c;
    color: #fff;
    text-align: center;
}

.weather-text,
.language,
.clock {
    display: flex;
    flex-direction: column;
}

.muted {
    color: #5f5850;
}

.apps {
    display: flex;
    align-items: center;
    margin-right: 8px;
}

.search {
    display: flex;
    align-items: center;
    width: 328px;
    height: 48px;
    margin: 0 9px 0 21px;
    padding: 0 8px 0 16px;
    border: 2px solid #e6d3c3;
    border-bottom-color: #d0bdae;
    border-radius: 24px;
    background-color: #fdf8f3;
}

.search input {
    flex: 1;
    min-width: 0;
    margin-left: 13px;
    padding: 0;
    border: none;
    background: none;
    font-size: 20px;
}

.search input::placeholder {
    color: #5d5a57;
}

.app {
    position: relative;
    display: flex;
    align-items: center;
    justify-content: center;
    width: 56px;
    height: 56px;
    margin-right: 10px;
    border-radius: 6px;
}

.app.active {
    background-color: #fdf3ea;
    box-shadow: 0 0 0 1px #eedccc;
}

.app.running::after,
.app.active::after {
    content: "";
    position: absolute;
    bottom: 0;
    width: 9px;
    height: 5px;
    border-radius: 3px;
    background-color: #8b8178;
}

.app.active::after {
    width: 24px;
    background-color: #0078d4;
}

.ij-text {
    font-family: "DejaVu Sans Mono", monospace;
    font-size: 12px;
    font-weight: 700;
    fill: #fff;
}

.tray {
    display: flex;
    align-items: center;
    justify-content: flex-end;
    gap: 24px;
}

.language {
    margin: 0 2px;
    align-items: center;
}

.status {
    display: flex;
    align-items: center;
    gap: 12px;
}

.clock {
    align-items: flex-end;
}
```
